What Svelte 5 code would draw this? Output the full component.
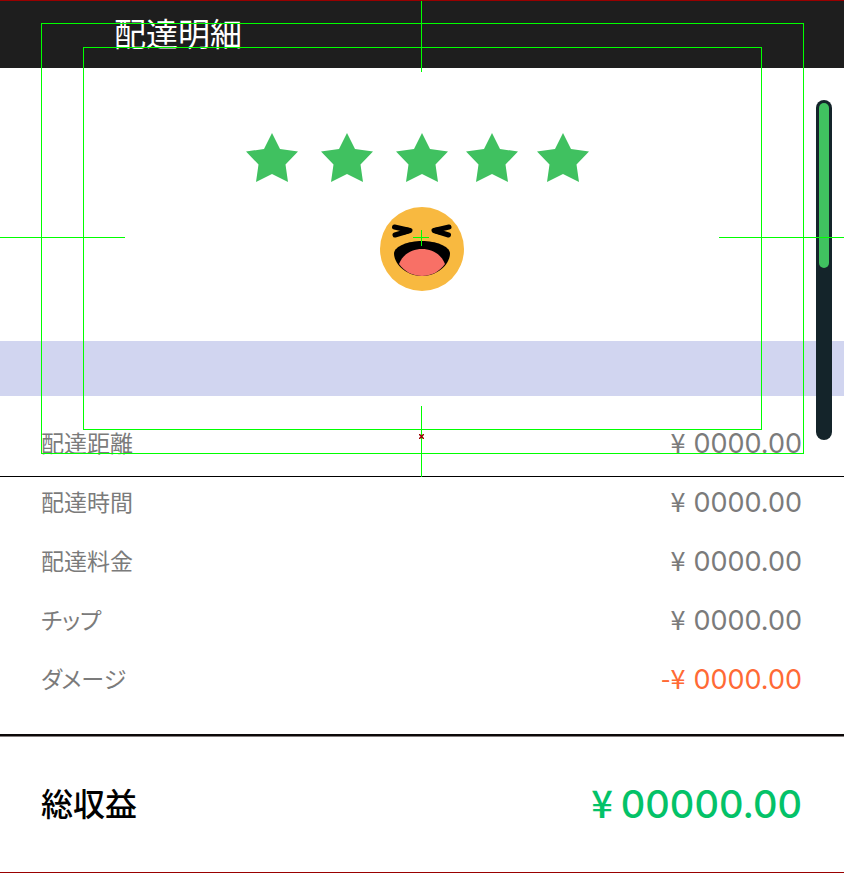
<script>
  const rows = [
    { label: '配達距離', amount: '0000.00' },
    { label: '配達時間', amount: '0000.00' },
    { label: '配達料金', amount: '0000.00' },
    { label: 'チップ', amount: '0000.00' },
    { label: 'ダメージ', amount: '0000.00', loss: true }
  ];
</script>

{#snippet star()}
  <svg class="star" viewBox="0 0 52 49" aria-hidden="true">
    <path d="M26 0 34 16 52 18.500 39.500 31.500 42 49 26 41 10 49 12.500 31.500 0 18.500 18 16Z" />
  </svg>
{/snippet}

<main class="screen">
  <header><h1>配達明細</h1></header>

  <section class="rating" aria-label="5 / 5">
    <div class="stars">
      <div class="near">{@render star()}{@render star()}{@render star()}</div>
      <div class="far">{@render star()}{@render star()}</div>
    </div>
    <svg class="face" viewBox="0 0 84 84" aria-hidden="true">
      <circle cx="42" cy="42" r="42" fill="#f8b940" />
      <g fill="none" stroke="#000" stroke-width="5" stroke-linecap="round" stroke-linejoin="round">
        <path d="M14.500 20 30 23.500 15 28" />
        <path d="M69 20 54 23.500 68.500 28" />
        <path d="M24 22.500 29 23.500 24 25M60 22.500 55 23.500 60 25" />
      </g>
      <path d="M14 46C15 39 28 34 42 34S69 39 70 46C70 58 57 69 42 69S14 58 14 46Z" />
      <path d="M19 57C23 47 32 42 42 42S61 47 65 57C60 64 52 69 42 69S24 64 19 57Z" fill="#f87066" />
    </svg>
  </section>

  <div class="band"></div>

  <dl class="rows">
    {#each rows as row}
      <div class="row" class:loss={row.loss}>
        <dt>{row.label}</dt>
        <dd>{#if row.loss}<span class="yen">-</span>{/if}<span class="yen">¥</span><span>{row.amount}</span></dd>
      </div>
    {/each}
  </dl>

  <dl class="total">
    <dt>総収益</dt>
    <dd><span class="yen">¥</span><span>00000.00</span></dd>
  </dl>

  <div class="scroll"><div class="thumb"></div></div>

  <div class="guides" aria-hidden="true">
    <div class="frame outer"></div>
    <div class="frame inner"></div>
    <i class="v top"></i>
    <i class="v bottom"></i>
    <i class="h left"></i>
    <i class="h right"></i>
    <i class="v mid"></i>
    <i class="h mid"></i>
    <svg class="pivot" viewBox="0 0 5 5"><path d="M0 0 5 5M5 0 0 5" stroke="#900" stroke-width="1.500" /></svg>
  </div>
</main>

<style>
  :global(body) { margin: 0; background: #fff; }
  .screen {
    position: relative;
    box-sizing: border-box;
    min-height: 100vh;
    overflow: hidden;
    border-bottom: 1px solid #900;
    font-family: 'Inter', 'Noto Sans CJK JP', sans-serif;
    color: #7b7b7b;
  }
  header {
    box-sizing: border-box;
    height: 68px;
    padding: 0 0 5px 114px;
    border-top: 1px solid #900;
    background: #1e1e1e;
    display: flex;
    align-items: center;
  }
  h1 {
    margin: 0;
    font: 400 32px/48px 'Noto Sans CJK JP', sans-serif;
    color: #fff;
  }
  .rating {
    display: flex;
    flex-direction: column;
    align-items: center;
    gap: 25px;
    padding: 65px 0 50px;
  }
  .stars { display: flex; gap: 18px; padding-right: 10px; }
  .near { display: flex; gap: 23px; }
  .far { display: flex; gap: 19px; }
  .star { display: block; width: 52px; height: 49px; fill: #40c160; }
  .face { display: block; width: 84px; height: 84px; }
  .band { height: 55px; background: #d1d5f0; }
  dl, dd { margin: 0; }
  .rows { padding: 16px 42px 27px 41px; border-bottom: 2px solid #0c0808; }
  .row { display: flex; justify-content: space-between; align-items: center; height: 59px; }
  dt {
    font: 400 23px/34px 'Noto Sans CJK JP', sans-serif;
    font-feature-settings: 'palt';
  }
  dd {
    display: flex;
    align-items: baseline;
    padding-top: 2px;
    font-size: 27px;
    line-height: 34px;
    font-weight: 400;
  }
  .yen { font-family: 'Noto Sans CJK JP', sans-serif; font-size: 27px; }
  .yen + span:last-child { margin-left: 8px; }
  .loss dd { color: #ff6a35; }
  .total {
    display: flex;
    box-sizing: border-box;
    justify-content: space-between;
    align-items: center;
    height: 136px;
    padding: 0 42px 4px 41px;
    box-shadow: inset 0 1px #857f7f;
  }
  .total dt { font-size: 32px; line-height: 48px; font-weight: 500; color: #000; }
  .total dd { font-size: 38px; line-height: 48px; font-weight: 500; color: #04c268; }
  .total .yen { font-size: 38px; }
  .scroll {
    position: absolute;
    top: 100px;
    right: 12px;
    box-sizing: border-box;
    width: 16px;
    height: 340px;
    padding: 3px;
    border-radius: 8px;
    background: #14242a;
  }
  .thumb { height: 165px; border-radius: 5px; background: #40c160; }
  .guides {
    position: absolute;
    inset: 0 0 auto;
    height: 476px;
    border-bottom: 1px solid #000;
    pointer-events: none;
  }
  .frame { position: absolute; border: 1px solid #0f0; }
  .outer { inset: 23px 40px 22px 41px; }
  .inner { inset: 47px 82px 46px 83px; }
  .guides i { position: absolute; background: #0f0; }
  .v { width: 1px; height: 71px; left: calc(50% - 1px); }
  .h { height: 1px; width: 125px; top: 237px; }
  .top { top: 1px; }
  .bottom { bottom: -1px; }
  .left { left: 0; }
  .right { right: 0; }
  .v.mid { top: 230px; height: 16px; }
  .h.mid { left: calc(50% - 9px); width: 16px; }
  .pivot { position: absolute; width: 5px; height: 5px; left: calc(50% - 3px); top: 434px; }
</style>
